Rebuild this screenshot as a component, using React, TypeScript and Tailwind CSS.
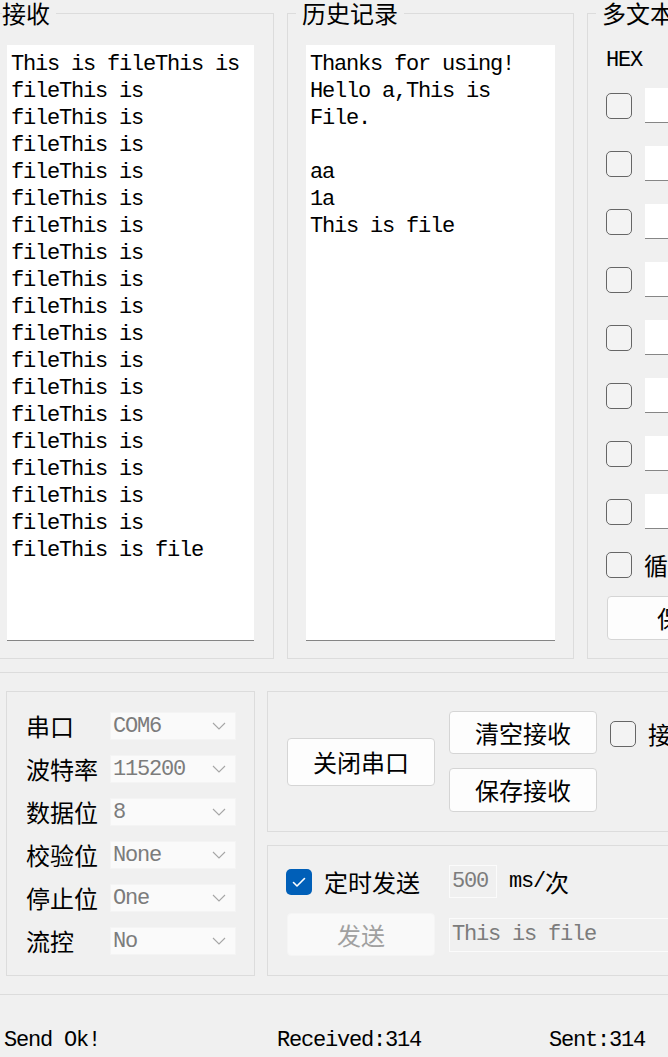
import React from "react";

const MONO = "font-['Liberation_Mono',monospace] text-[22px] tracking-[-1.2px]";
const CJK = "font-['Noto_Sans_CJK_SC',sans-serif] text-[24px]";

function Checkbox({ checked = false }: { checked?: boolean }) {
  if (checked) {
    return (
      <div className="w-[26px] h-[26px] shrink-0 rounded-[5px] bg-[#005fb8] flex items-center justify-center">
        <svg width="26" height="26" viewBox="0 0 26 26">
          <path d="M7.5 13.5 L11 17 L18.5 9.5" fill="none" stroke="#ffffff" strokeWidth="1.6" strokeLinecap="round" strokeLinejoin="round" />
        </svg>
      </div>
    );
  }
  return <div className="w-[26px] h-[26px] shrink-0 rounded-[5px] border-[1.5px] border-[#666666] bg-[#f3f3f3]" />;
}

function Chevron() {
  return (
    <svg width="14" height="8" viewBox="0 0 14 8">
      <path d="M1 1 L7 7 L13 1" fill="none" stroke="#a6a6a6" strokeWidth="1.1" />
    </svg>
  );
}

const received = [
  "This is fileThis is",
  ...Array.from({ length: 17 }, () => "fileThis is"),
  "fileThis is file",
];

const history = ["Thanks for using!", "Hello a,This is", "File.", "", "aa", "1a", "This is file"];

function TextEdit({ lines, width }: { lines: string[]; width: string }) {
  return (
    <div className={`${width} h-[596px] bg-white border-b border-[#858585] pt-[6px] pl-[4px] overflow-hidden`}>
      {lines.map((l, i) => (
        <div key={i} className={`${MONO} leading-[27px] h-[27px] whitespace-pre text-black`}>
          {l}
        </div>
      ))}
    </div>
  );
}

const combos: [string, string][] = [
  ["串口", "COM6"],
  ["波特率", "115200"],
  ["数据位", "8"],
  ["校验位", "None"],
  ["停止位", "One"],
  ["流控", "No"],
];

export default function App() {
  return (
    <div className="w-[668px] h-[1057px] overflow-hidden bg-[#f0f0f0] text-black">
      {/* top row */}
      <div className="flex gap-[13px] ml-[-13px] mt-[1px] h-[658px]">
        <fieldset className="w-[287px] h-[658px] shrink-0 border border-[#dcdcdc]">
          <legend className={`ml-[14px] pl-0 pr-[6px] ${CJK} leading-[24px]`}>接收</legend>
          <div className="pl-[19px] pt-[20px]">
            <TextEdit lines={received} width="w-[247px]" />
          </div>
        </fieldset>
        <fieldset className="w-[287px] h-[658px] shrink-0 border border-[#dcdcdc]">
          <legend className={`ml-[8px] px-[6px] ${CJK} leading-[24px]`}>历史记录</legend>
          <div className="pl-[18px] pt-[20px]">
            <TextEdit lines={history} width="w-[249px]" />
          </div>
        </fieldset>
        <fieldset className="w-[287px] h-[658px] shrink-0 border border-[#dcdcdc]">
          <legend className={`ml-[8px] px-[6px] ${CJK} leading-[24px] whitespace-nowrap`}>多文本发送</legend>
          <div className="pl-[18px] pt-[20px] flex flex-col">
            <div className={`h-[30px] flex items-center ${MONO}`}>HEX</div>
            <div className="mt-[13px] flex flex-col gap-[23px]">
              {Array.from({ length: 8 }, (_, i) => (
                <div key={i} className="h-[35px] flex items-center gap-[13px]">
                  <Checkbox />
                  <div className="w-[220px] h-[35px] bg-white border-b border-[#868686]" />
                </div>
              ))}
            </div>
            <div className="mt-[18px] h-[35px] flex items-center gap-[12px]">
              <Checkbox />
              <span className={`${CJK} leading-[30px] whitespace-nowrap`}>循环发送</span>
            </div>
            <div className={`mt-[14px] ml-[1px] w-[148px] h-[44px] rounded-[4px] border border-[#d5d5d5] bg-[#fdfdfd] flex items-center justify-center ${CJK}`}>
              保存
            </div>
          </div>
        </fieldset>
      </div>

      <div className="mt-[13px] h-[1px] bg-[#dcdcdc]" />

      {/* bottom row */}
      <div className="mt-[18px] flex pl-[6px] gap-[12px] h-[285px]">
        <div className="w-[249px] h-[285px] shrink-0 border border-[#dcdcdc] pl-[19px] pt-[20px] flex flex-col gap-[15px]">
          {combos.map(([label, value]) => (
            <div key={label} className="h-[28px] flex items-center">
              <div className={`w-[84px] ${CJK} leading-[28px] whitespace-nowrap`}>{label}</div>
              <div className="w-[126px] h-[28px] bg-[#fafafa] border border-[#f4f4f4] flex items-center justify-between pl-[2px] pr-[9px]">
                <span className={`${MONO} text-[#7c7c7c] leading-[28px] pt-[2px]`}>{value}</span>
                <Chevron />
              </div>
            </div>
          ))}
        </div>

        <div className="flex flex-col gap-[13px] w-[500px] shrink-0">
          <div className="h-[141px] border border-[#dcdcdc] pl-[19px] flex items-center">
            <div className={`w-[148px] h-[48px] rounded-[4px] border border-[#d5d5d5] bg-[#fdfdfd] flex items-center justify-center ${CJK}`}>
              关闭串口
            </div>
            <div className="ml-[14px] flex flex-col gap-[14px]">
              <div className={`w-[148px] h-[43px] rounded-[4px] border border-[#d5d5d5] bg-[#fdfdfd] flex items-center justify-center ${CJK}`}>
                清空接收
              </div>
              <div className={`w-[148px] h-[44px] rounded-[4px] border border-[#d5d5d5] bg-[#fdfdfd] flex items-center justify-center ${CJK}`}>
                保存接收
              </div>
            </div>
            <div className="ml-[13px] self-start mt-[20px] h-[43px] flex items-center gap-[12px]">
              <Checkbox />
              <span className={`${CJK} whitespace-nowrap`}>接收时间</span>
            </div>
          </div>

          <div className="h-[131px] border border-[#dcdcdc] pt-[19px] flex flex-col">
            <div className="h-[33px] flex items-center pl-[18px]">
              <Checkbox checked />
              <span className={`ml-[12px] ${CJK} leading-[33px] whitespace-nowrap`}>定时发送</span>
              <div className="ml-[29px] w-[48px] h-[33px] border border-[#fbfbfb] bg-[#f0f0f0] flex items-center pl-[2px]">
                <span className={`${MONO} text-[#7c7c7c]`}>500</span>
              </div>
              <span className="ml-[12px] flex items-center whitespace-nowrap">
                <span className={MONO}>ms/</span>
                <span className={CJK}>次</span>
              </span>
            </div>
            <div className="mt-[15px] h-[43px] flex items-center pl-[19px]">
              <div className={`w-[148px] h-[43px] rounded-[4px] border border-[#f5f5f5] bg-[#f9f9f9] flex items-center justify-center ${CJK} text-[#a0a0a0]`}>
                发送
              </div>
              <div className="ml-[14px] w-[300px] h-[34px] border border-[#fbfbfb] bg-[#f0f0f0] flex items-center pl-[2px]">
                <span className={`${MONO} text-[#7c7c7c] whitespace-pre`}>This is file</span>
              </div>
            </div>
          </div>
        </div>
      </div>

      <div className="mt-[18px] h-[1px] bg-[#dcdcdc]" />

      <div className={`mt-[30px] h-[30px] flex items-center pl-[4px] ${MONO} whitespace-pre`}>
        <span className="w-[273px] shrink-0">Send Ok!</span>
        <span className="w-[272px] shrink-0">Received:314</span>
        <span>Sent:314</span>
      </div>
    </div>
  );
}
